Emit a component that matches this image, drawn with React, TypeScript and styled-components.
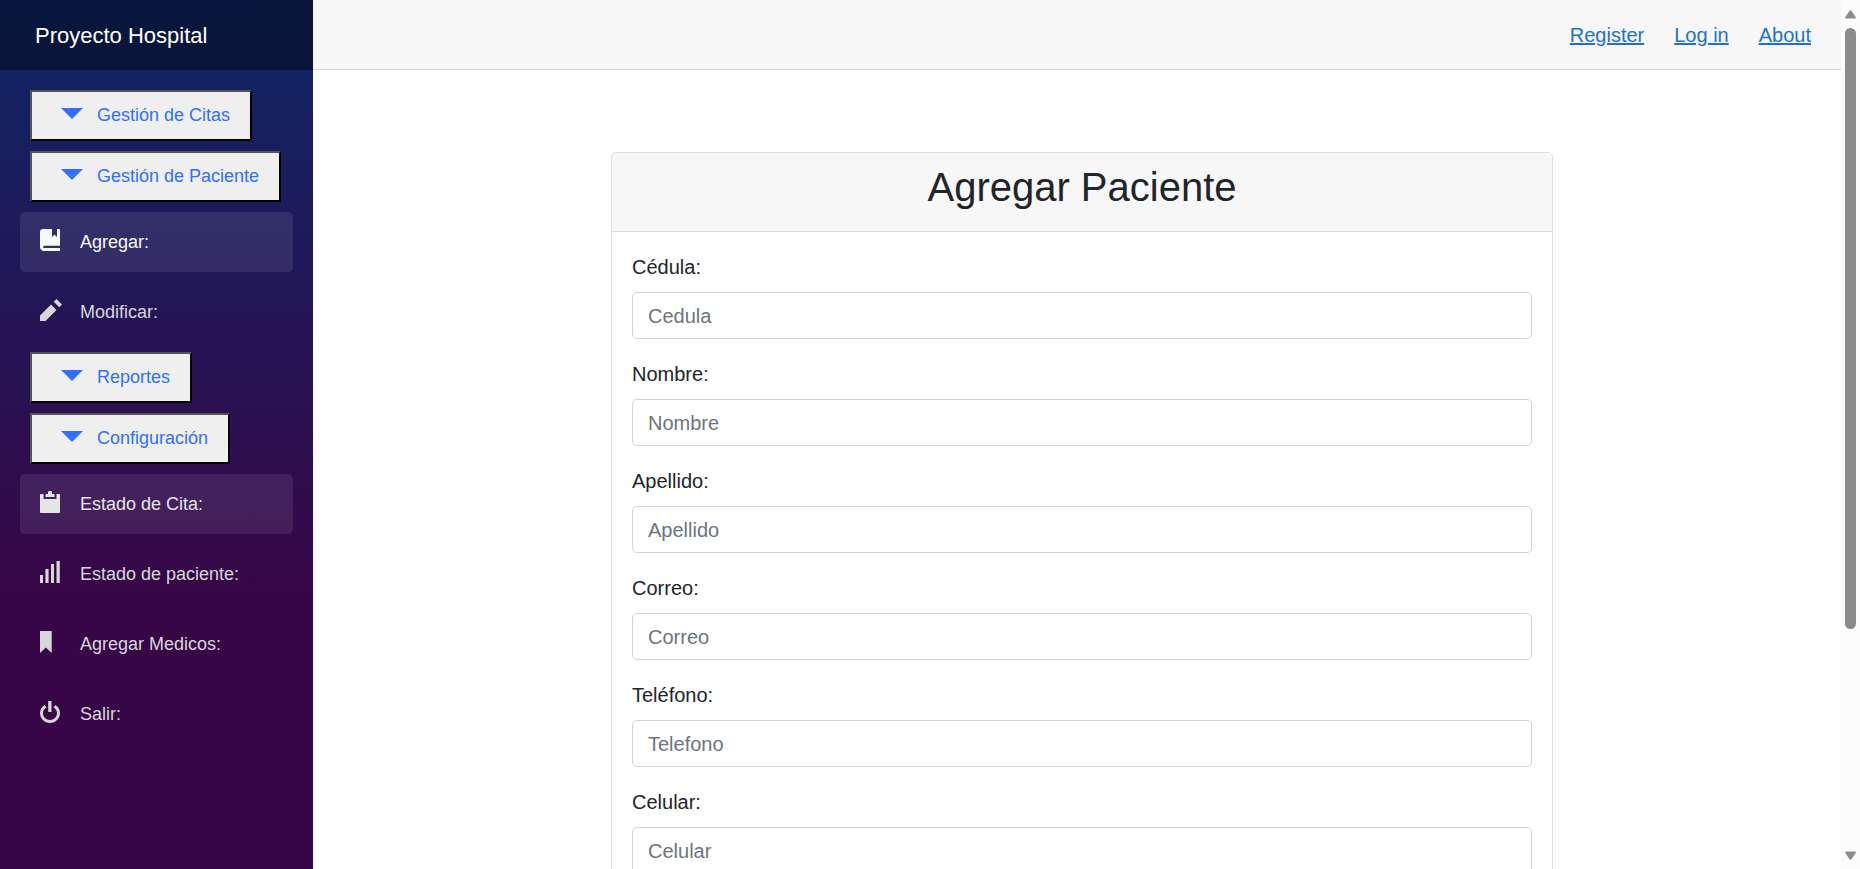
import React from "react";
import styled, { createGlobalStyle } from "styled-components";

const GlobalStyle = createGlobalStyle`
  *, *::before, *::after { box-sizing: border-box; }
  body {
    margin: 0;
    overflow: hidden;
    background: #fefefe;
    color: #212529;
    font-family: "Liberation Sans", Arial, sans-serif;
    font-size: 20px;
    line-height: 1.5;
  }
`;

const Page = styled.div`
  display: flex;
  height: 869px;
  overflow: hidden;
`;

const Sidebar = styled.aside`
  flex: none;
  width: 313px;
  background-image: linear-gradient(180deg, rgb(14, 39, 103) 0%, #380546 70%);
`;

const Brand = styled.div`
  display: flex;
  align-items: center;
  height: 70px;
  padding-left: 35px;
  background: rgba(0, 0, 0, 0.4);
  color: #fff;
  font-size: 22px;
`;

const Nav = styled.nav`
  display: flex;
  flex-direction: column;
  align-items: flex-start;
  gap: 10px;
  padding: 20px 20px 0;
`;

const GroupButton = styled.button`
  display: flex;
  align-items: center;
  height: 51px;
  margin-left: 10px;
  padding: 0 20px 1px 29px;
  gap: 14px;
  border: 2px outset #000;
  border-radius: 0;
  background: #efefef;
  color: #3070ff;
  font: 18px/27px "Liberation Sans", Arial, sans-serif;
  white-space: nowrap;
`;

const NavLink = styled.a<{ $tone?: "active" | "hover" }>`
  display: flex;
  align-items: center;
  width: 100%;
  height: 60px;
  padding-left: 20px;
  border-radius: 5px;
  background: ${(p) => (p.$tone ? "rgba(255, 255, 255, 0.09)" : "transparent")};
  color: ${(p) => (p.$tone === "active" ? "#f8f8f8" : p.$tone === "hover" ? "#e4e4e4" : "#d7d7d7")};
  font-size: 18px;
  text-decoration: none;
`;

const IconSlot = styled.span`
  display: flex;
  flex: none;
  width: 40px;
  padding-bottom: 4px;
`;

const Glyph = styled.svg`
  flex: none;
  width: 22px;
  height: 22px;
  fill: currentColor;
`;

const Main = styled.main`
  flex: 1;
  min-width: 0;
`;

const TopRow = styled.header`
  display: flex;
  align-items: center;
  justify-content: flex-end;
  gap: 30px;
  height: 70px;
  padding-right: 30px;
  border-bottom: 1px solid #d6d5d5;
  background: #f7f7f7;
`;

const TopLink = styled.a`
  color: #1f72c6;
  text-decoration: underline;
`;

const Card = styled.section`
  width: 942px;
  margin: 82px 0 0 298px;
  border: 1px solid #dfdfdf;
  border-radius: 5px;
  overflow: hidden;
`;

const CardHeader = styled.div`
  padding: 10px 20px;
  border-bottom: 1px solid #d9d9d9;
  background: #f7f7f7;
  text-align: center;
`;

const Title = styled.h1`
  margin: 0 0 10px;
  font-size: 40px;
  font-weight: 400;
  line-height: 48px;
`;

const Form = styled.form`
  display: flex;
  flex-direction: column;
  gap: 20px;
  padding: 20px;
`;

const Field = styled.label`
  display: flex;
  flex-direction: column;
  gap: 10px;
`;

const Input = styled.input`
  height: 47px;
  padding: 8px 15px 7px;
  border: 1px solid #ced4da;
  border-radius: 5px;
  background: #fff;
  font: 20px/30px "Liberation Sans", Arial, sans-serif;
  &::placeholder { color: #6c757d; opacity: 1; }
`;

const ScrollTrack = styled.div`
  display: flex;
  flex: none;
  flex-direction: column;
  align-items: center;
  width: 19px;
  padding: 10px 0 9px;
  background: #fcfcfc;
`;

const ScrollThumb = styled.div`
  width: 11px;
  height: 601px;
  margin: 9px 0 auto;
  border-radius: 6px;
  background: #8b8b8b;
`;

const ScrollArrow = styled.svg`
  width: 11px;
  height: 9px;
  fill: #8b8b8b;
`;

const icons = {
  caret: "M0 4h22l-11 11z",
  book: "M3 0C1.200 0 0 1.200 0 3v15c0 2.300 1.700 4 4 4h16v-3H4.500c-.9 0-1.500-.4-1.500-1s.6-1.300 1.500-1.300H20V1.300C20 .5 19.500 0 18.700 0H17v8l-2.500-2.500L12 8V0z",
  pencil: "M16.500 0l-2.750 2.750 5.500 5.500L22 5.500zM11 5.500l-11 11V22h5.500l11-11z",
  clipboard: "M9.500 0C8.600 0 8 .6 8 1.400V3H6.300C5.800 3 5.500 3.300 5.500 3.800V6h9V3.800c0-.5-.3-.8-.8-.8H12V1.400C12 .6 11.400 0 10.500 0zM.8 3C.3 3 0 3.300 0 3.800v17.400c0 .5.3.8.8.8h18.400c.5 0 .8-.3.8-.8V3.800c0-.5-.3-.8-.8-.8H16.500v5h-13V3z",
  signal: "M16.500 0h3.300v22h-3.300zM11 3h3v19h-3zM5.400 8h3.200v14H5.400zM0 14h3v8H0z",
  bookmark: "M0 0h11.700v22L5.850 16.500 0 22z",
  power: "M8.200 0h3.300v11H8.200zM4.600 4C1.800 5.800 0 8.600 0 12c0 5.600 4.300 10 10 10s10-4.400 10-10c0-3.400-1.800-6.200-4.600-8l-1.900 2.500c2.100 1.200 3.500 3.100 3.500 5.500 0 3.900-3.100 7-7 7s-7-3.100-7-7c0-2.400 1.400-4.300 3.500-5.500z",
};

type IconName = keyof typeof icons;

const Icon = ({ name }: { name: IconName }) => (
  <Glyph viewBox="0 0 22 22" aria-hidden="true">
    <path d={icons[name]} />
  </Glyph>
);

const Group = ({ children }: { children: React.ReactNode }) => (
  <GroupButton type="button">
    <Icon name="caret" />
    <span>{children}</span>
  </GroupButton>
);

const Item = ({ icon, tone, children }: { icon: IconName; tone?: "active" | "hover"; children: React.ReactNode }) => (
  <NavLink $tone={tone}>
    <IconSlot>
      <Icon name={icon} />
    </IconSlot>
    <span>{children}</span>
  </NavLink>
);

const fields = [
  ["Cédula:", "Cedula"],
  ["Nombre:", "Nombre"],
  ["Apellido:", "Apellido"],
  ["Correo:", "Correo"],
  ["Teléfono:", "Telefono"],
  ["Celular:", "Celular"],
];

export default function App() {
  return (
    <>
      <GlobalStyle />
      <Page>
        <Sidebar>
          <Brand>Proyecto Hospital</Brand>
          <Nav>
            <Group>Gestión de Citas</Group>
            <Group>Gestión de Paciente</Group>
            <Item icon="book" tone="active">Agregar:</Item>
            <Item icon="pencil">Modificar:</Item>
            <Group>Reportes</Group>
            <Group>Configuración</Group>
            <Item icon="clipboard" tone="hover">Estado de Cita:</Item>
            <Item icon="signal">Estado de paciente:</Item>
            <Item icon="bookmark">Agregar Medicos:</Item>
            <Item icon="power">Salir:</Item>
          </Nav>
        </Sidebar>
        <Main>
          <TopRow>
            <TopLink href="#">Register</TopLink>
            <TopLink href="#">Log in</TopLink>
            <TopLink href="#">About</TopLink>
          </TopRow>
          <Card>
            <CardHeader>
              <Title>Agregar Paciente</Title>
            </CardHeader>
            <Form>
              {fields.map(([label, placeholder]) => (
                <Field key={placeholder}>
                  {label}
                  <Input placeholder={placeholder} />
                </Field>
              ))}
            </Form>
          </Card>
        </Main>
        <ScrollTrack>
          <ScrollArrow viewBox="0 0 11 9">
            <path d="M4.600.7q.9-1.100 1.800 0L10.800 7.300q.4 1.200-.8 1.200H1Q-.2 8.500.2 7.300z" />
          </ScrollArrow>
          <ScrollThumb />
          <ScrollArrow viewBox="0 0 11 9">
            <path d="M4.600 8.300q.9 1.100 1.800 0L10.800 1.700Q11.200.5 10 .5H1Q-.2.5.2 1.700z" />
          </ScrollArrow>
        </ScrollTrack>
      </Page>
    </>
  );
}
